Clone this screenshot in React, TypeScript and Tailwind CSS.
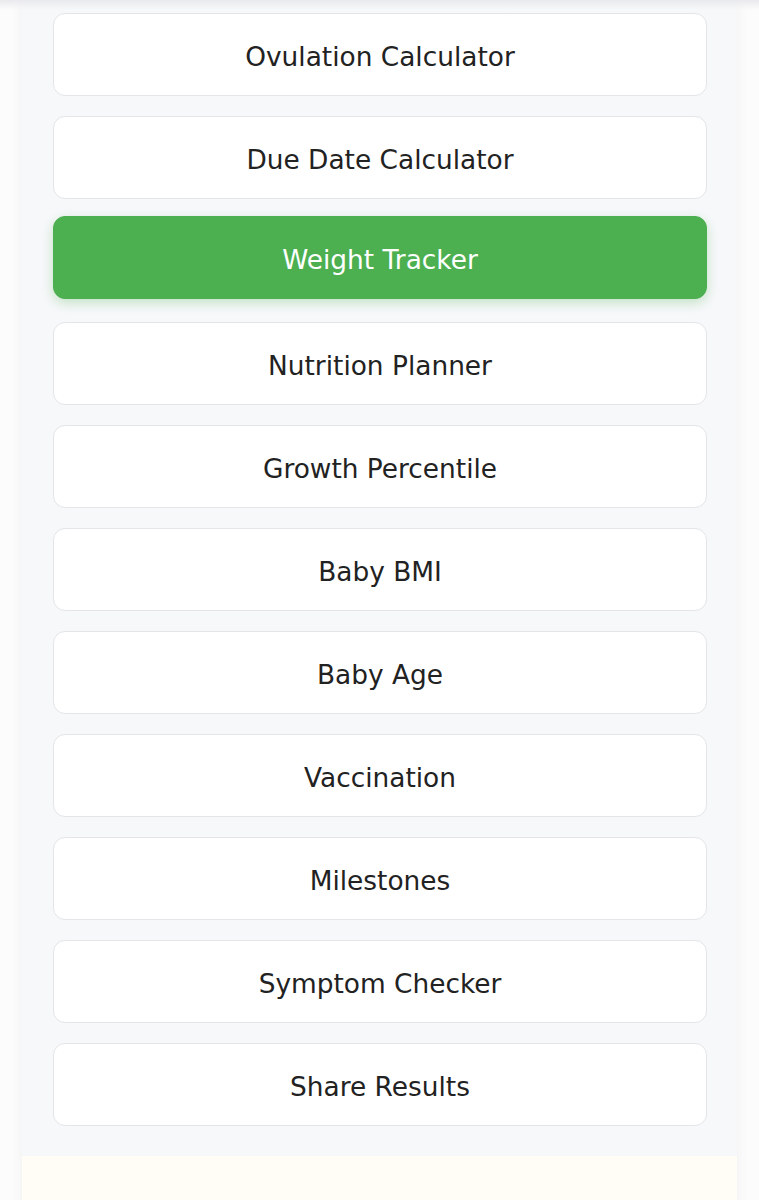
const tools = [
  "Ovulation Calculator",
  "Due Date Calculator",
  "Weight Tracker",
  "Nutrition Planner",
  "Growth Percentile",
  "Baby BMI",
  "Baby Age",
  "Vaccination",
  "Milestones",
  "Symptom Checker",
  "Share Results",
];

const active = "Weight Tracker";

export default function App() {
  return (
    <div
      className="relative min-h-[1200px] bg-[#fcfcfd] overflow-hidden"
      style={{ fontFamily: '"DejaVu Sans", sans-serif' }}
    >
      {/* shadow of the header above */}
      <div className="absolute inset-x-0 top-0 h-[10px] bg-gradient-to-b from-[#e9eaed] to-transparent" />

      <div className="mx-[22px] bg-[#f7f8fa] shadow-[0_0_14px_rgba(0,0,0,0.05)]">
        <div className="flex flex-col gap-[20px] pl-[31px] pr-[30px] pt-[13px] pb-[30px]">
          {tools.map((t) =>
            t === active ? (
              <button
                key={t}
                className="h-[83px] w-full rounded-[12px] border border-[#4caf50] bg-[#4caf50] pt-[4px] text-[26.4px] text-white -translate-y-[3px] shadow-[0_4px_12px_rgba(76,175,80,0.3)]"
              >
                {t}
              </button>
            ) : (
              <button
                key={t}
                className="h-[83px] w-full rounded-[12px] border border-[#e3e5e9] bg-white pt-[4px] text-[26.4px] text-[#222]"
              >
                {t}
              </button>
            )
          )}
        </div>
        <div className="h-[60px] bg-[#fffdf6]" />
      </div>
    </div>
  );
}
